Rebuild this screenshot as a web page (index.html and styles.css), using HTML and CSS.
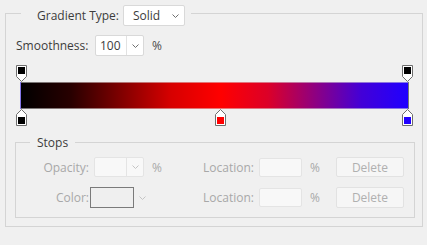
FILE: index.html
```html
<!DOCTYPE html>
<html>
<head>
<meta charset="utf-8">
<link rel="stylesheet" href="styles.css">
</head>
<body>
<div class="group outer">
  <div class="group-head head-main">
    <span class="lbl-type">Gradient Type:</span>
    <div class="select"><span>Solid</span><svg class="chev" width="7" height="4" viewBox="0 0 7 4"><polyline points="0.5,0.5 3.5,3.5 6.5,0.5"/></svg></div>
  </div>
  <div class="smooth-row">
    <span class="lbl-smooth">Smoothness:</span>
    <div class="combo"><span class="val">100</span><span class="drop"><svg class="chev" width="7" height="4" viewBox="0 0 7 4"><polyline points="0.5,0.5 3.5,3.5 6.5,0.5"/></svg></span></div>
    <span class="unit">%</span>
  </div>
  <div class="gradient">
    <div class="stop-row">
      <svg class="stop" style="left:0px" width="11" height="17" viewBox="0 0 11 17"><polygon points="0.5,0.5 10.5,0.5 10.5,11.5 5.5,16.5 0.5,11.5"/><rect x="2" y="2" width="7" height="7" fill="#000"/></svg>
      <svg class="stop" style="left:386px" width="11" height="17" viewBox="0 0 11 17"><polygon points="0.5,0.5 10.5,0.5 10.5,11.5 5.5,16.5 0.5,11.5"/><rect x="2" y="2" width="7" height="7" fill="#000"/></svg>
    </div>
    <div class="bar"></div>
    <div class="stop-row">
      <svg class="stop" style="left:0px" width="11" height="17" viewBox="0 0 11 17"><polygon points="0.5,5.5 5.5,0.5 10.5,5.5 10.5,16.5 0.5,16.5"/><rect x="2" y="8" width="7" height="7" fill="#000"/></svg>
      <svg class="stop" style="left:199px" width="11" height="17" viewBox="0 0 11 17"><polygon points="0.5,5.5 5.5,0.5 10.5,5.5 10.5,16.5 0.5,16.5"/><rect x="2" y="8" width="7" height="7" fill="#ff0000"/></svg>
      <svg class="stop" style="left:386px" width="11" height="17" viewBox="0 0 11 17"><polygon points="0.5,5.5 5.5,0.5 10.5,5.5 10.5,16.5 0.5,16.5"/><rect x="2" y="8" width="7" height="7" fill="#2000ff"/></svg>
    </div>
  </div>
  <div class="group stops">
    <div class="group-head head-stops">Stops</div>
    <div class="stops-grid">
      <span class="dlbl">Opacity:</span>
      <div class="cell"><div class="combo combo-dis"><span class="val"></span><span class="drop"><svg class="chev dis" width="7" height="4" viewBox="0 0 7 4"><polyline points="0.5,0.5 3.5,3.5 6.5,0.5"/></svg></span></div></div>
      <span class="dunit">%</span>
      <span class="dlbl">Location:</span>
      <div class="cell"><div class="field"></div></div>
      <span class="dunit dunit2">%</span>
      <div class="cell"><div class="btn">Delete</div></div>

      <span class="dlbl">Color:</span>
      <div class="cell"><div class="swatch"></div><svg class="chev dis chev-sw" width="7" height="4" viewBox="0 0 7 4"><polyline points="0.5,0.5 3.5,3.5 6.5,0.5"/></svg></div>
      <span></span>
      <span class="dlbl">Location:</span>
      <div class="cell"><div class="field"></div></div>
      <span class="dunit dunit2">%</span>
      <div class="cell"><div class="btn btn2">Delete</div></div>
    </div>
  </div>
</div>
</body>
</html>
```
FILE: styles.css
```css
html, body {
  margin: 0;
  padding: 0;
  background: #f0f0f0;
  width: 427px;
  height: 245px;
  overflow: hidden;
  font-family: "Open Sans", "Noto Sans", sans-serif;
  font-size: 12px;
  color: #3c3c3c;
}

.group {
  border: 1px solid #d4d4d4;
}

.outer {
  margin: 13px 4px 0 5px;
  padding: 0 0 8px 0;
}

.group-head {
  background: #f0f0f0;
  width: fit-content;
  display: flex;
  align-items: center;
}

.head-main {
  margin: -9px 0 0 15px;
  padding: 0 6px 0 16px;
  height: 21px;
}

.lbl-type {
  width: 86px;
  white-space: nowrap;
}

.select {
  width: 62px;
  height: 21px;
  box-sizing: border-box;
  border: 1px solid #d9d9d9;
  border-radius: 2px;
  background: #fff;
  display: flex;
  align-items: center;
  justify-content: space-between;
  padding: 0 5px 0 9px;
}

.chev {
  display: block;
}
.chev polyline {
  fill: none;
  stroke: #6f6f6f;
  stroke-width: 1;
}
.chev.dis polyline {
  stroke: #c4c4c4;
}

.smooth-row {
  display: flex;
  align-items: center;
  margin: 9px 0 0 10px;
  height: 21px;
}

.lbl-smooth {
  width: 79px;
  white-space: nowrap;
}

.combo {
  width: 49px;
  height: 21px;
  box-sizing: border-box;
  border: 1px solid #d9d9d9;
  border-radius: 2px;
  background: #fff;
  display: flex;
}
.combo .val {
  flex: 1;
  padding-left: 4px;
  line-height: 19px;
}
.combo .drop {
  width: 16px;
  border-left: 1px solid #e2e2e2;
  display: flex;
  align-items: center;
  justify-content: center;
}

.unit {
  margin-left: 8px;
  color: #4a4a4a;
}

.gradient {
  margin: 9px 0 0 10px;
  width: 397px;
}

.stop-row {
  position: relative;
  height: 17px;
}

.stop {
  position: absolute;
  top: 0;
}
.stop polygon {
  fill: #fff;
  stroke: #6e6e6e;
  stroke-width: 1;
}

.bar {
  margin-left: 4px;
  width: 389px;
  height: 27px;
  box-sizing: border-box;
  border: 1px solid rgba(215, 215, 215, 0.55);
  background-clip: padding-box;
  background: linear-gradient(to right,
    rgb(0,0,0) 0%,
    rgb(40,0,0) 12.9%,
    rgb(128,0,0) 25.85%,
    rgb(215,0,0) 38.8%,
    rgb(255,0,0) 51.7%,
    rgb(220,0,40) 63.8%,
    rgb(143,0,128) 75.85%,
    rgb(67,0,215) 87.9%,
    rgb(32,0,255) 100%);
}

.stops {
  margin: 16px 7px 0 9px;
  padding: 0 0 9px 0;
}

.head-stops {
  margin: -9px 0 0 14px;
  padding: 0 7px;
  height: 16px;
}

.stops-grid {
  margin-top: 7px;
  display: grid;
  grid-template-columns: 78px 54px 52px 59px 43px 34px 68px;
  grid-template-rows: 20px 21px;
  row-gap: 10px;
  align-items: center;
  color: #a8a8a8;
}

.dlbl {
  text-align: right;
  padding-right: 5px;
  white-space: nowrap;
}

.dunit {
  padding-left: 4px;
}
.dunit2 {
  padding-left: 8px;
}

.cell {
  display: flex;
  align-items: center;
  height: 100%;
}

.combo-dis {
  width: 50px;
  height: 20px;
  background: #f8f8f8;
  border-color: #e4e4e4;
}
.combo-dis .drop {
  border-left-color: #e4e4e4;
}

.field {
  width: 43px;
  height: 19px;
  box-sizing: border-box;
  border: 1px solid #e4e4e4;
  border-radius: 2px;
  background: #f8f8f8;
}

.btn {
  width: 68px;
  height: 20px;
  box-sizing: border-box;
  border: 1px solid #e2e2e2;
  border-radius: 2px;
  background: #f6f6f6;
  display: flex;
  align-items: center;
  justify-content: center;
  color: #b0b0b0;
}
.btn2 {
  height: 21px;
}

.swatch {
  margin-left: -4px;
  width: 44px;
  height: 21px;
  box-sizing: border-box;
  border: 1px solid #7a7a7a;
  background: #efefef;
}
.chev-sw {
  margin-left: 5px;
}
```
